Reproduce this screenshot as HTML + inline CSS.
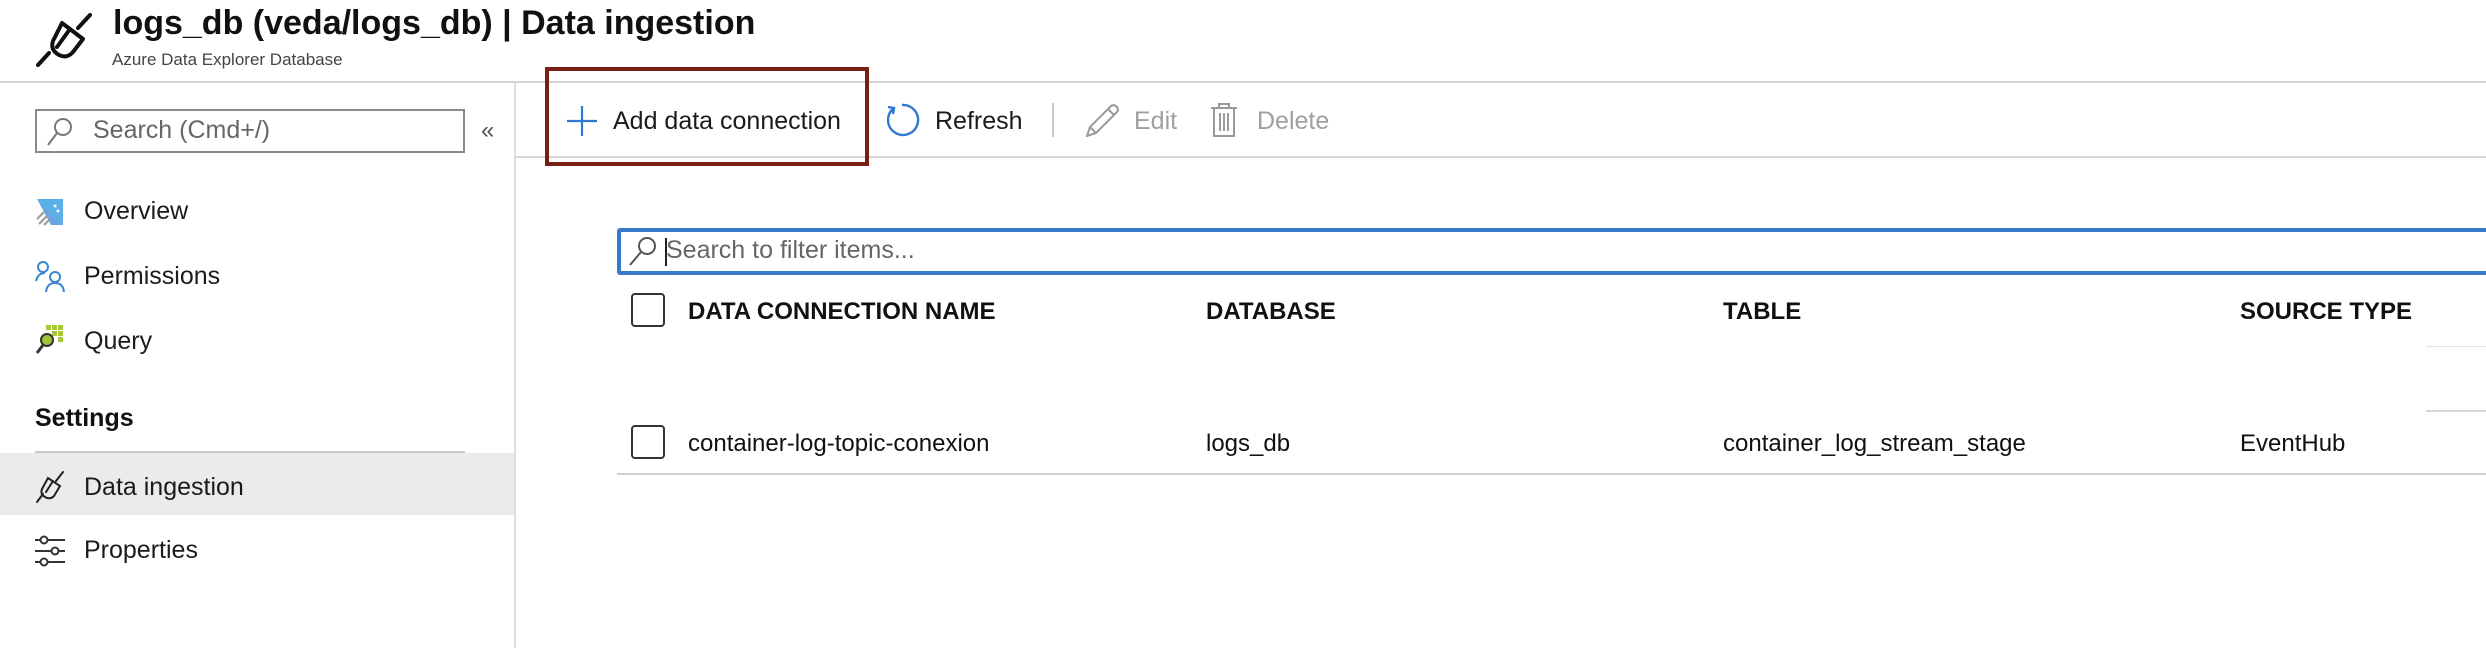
<!DOCTYPE html>
<html><head><meta charset="utf-8"><style>
*{margin:0;padding:0;box-sizing:border-box}
body{width:2486px;height:648px;background:#fff;font-family:"Liberation Sans",sans-serif;color:#1b1b1b;position:relative;overflow:hidden}
.a{position:absolute;white-space:nowrap}
.menu{font-size:25px;color:#1b1b1b}
.hdr{font-size:24px;font-weight:bold;color:#111}
.cell{font-size:24px;color:#111}
.cb{position:absolute;width:34px;height:34px;border:2px solid #333;border-radius:4px;background:#fff}
</style></head><body>
<!-- header -->
<svg class="a" style="left:35px;top:12px" width="58" height="56" viewBox="0 0 58 56"><g fill="none" stroke="#111" stroke-width="4" stroke-linecap="round" stroke-linejoin="round"><path d="M55 3 L43 16"/><path d="M3 53 L14 41"/><path d="M27 11 L48 27 L38 40 Q32 47 24 43 Q15 38 18 29 Z"/><path d="M35 17 L22 35"/></g></svg>
<div class="a" style="left:113px;top:4px;font-size:34px;font-weight:bold;color:#111">logs_db (veda/logs_db) | Data ingestion</div>
<div class="a" style="left:112px;top:50px;font-size:17px;color:#444">Azure Data Explorer Database</div>
<div class="a" style="left:0;top:81px;width:2486px;height:2px;background:#d6d6d6"></div>
<!-- sidebar -->
<div class="a" style="left:514px;top:83px;width:2px;height:565px;background:#dedede"></div>
<div class="a" style="left:35px;top:109px;width:430px;height:44px;border:2px solid #8a8a8a"></div>
<svg class="a" style="left:46px;top:117px" width="28" height="30" viewBox="0 0 28 30"><g fill="none" stroke="#777" stroke-width="2"><circle cx="17" cy="10" r="8"/><path d="M11 16 L2 28"/></g></svg>
<div class="a" style="left:93px;top:116px;font-size:25px;color:#666">Search (Cmd+/)</div>
<div class="a" style="left:481px;top:117px;font-size:24px;color:#555">«</div>
<svg class="a" style="left:35px;top:197px" width="30" height="30" viewBox="0 0 30 30"><path d="M2 2 L28 2 L28 28 Z" fill="#5ab0e8"/><path d="M2 2 L28 28 L16 28 Z" fill="#2a7fd0" opacity=".7"/><g stroke="#999" stroke-width="2"><path d="M2 22 L9 15"/><path d="M4 27 L12 19"/><path d="M9 28 L15 22"/></g><circle cx="20" cy="9" r="1.5" fill="#fff"/><circle cx="23" cy="14" r="1.5" fill="#fff"/></svg>
<div class="a menu" style="left:84px;top:197px">Overview</div>
<svg class="a" style="left:35px;top:261px" width="30" height="32" viewBox="0 0 30 32"><g fill="none" stroke="#3a86d0" stroke-width="2"><circle cx="8" cy="6" r="5"/><path d="M1 20 Q3 12 10 12"/><circle cx="20" cy="16" r="5"/><path d="M11 31 Q12 22 20 22 Q28 22 29 31"/></g></svg>
<div class="a menu" style="left:84px;top:262px">Permissions</div>
<svg class="a" style="left:35px;top:324px" width="30" height="32" viewBox="0 0 30 32"><g fill="#a8c83a"><rect x="11" y="1" width="5" height="5"/><rect x="17" y="1" width="5" height="5"/><rect x="23" y="1" width="5" height="5"/><rect x="17" y="7" width="5" height="5"/><rect x="23" y="7" width="5" height="5"/><rect x="23" y="13" width="5" height="5"/></g><circle cx="12" cy="16" r="6" fill="#9ec23a" stroke="#333" stroke-width="2"/><path d="M8 21 L2 29" stroke="#333" stroke-width="3"/></svg>
<div class="a menu" style="left:84px;top:327px">Query</div>
<div class="a" style="left:35px;top:404px;font-size:25px;font-weight:bold;color:#111">Settings</div>
<div class="a" style="left:35px;top:451px;width:430px;height:2px;background:#c8c8c8"></div>
<div class="a" style="left:0;top:453px;width:514px;height:62px;background:#edebe9"></div>
<svg class="a" style="left:35px;top:470px" width="30" height="34" viewBox="0 0 30 34"><g fill="none" stroke="#222" stroke-width="2" stroke-linecap="round"><path d="M28 2 L21 11"/><path d="M2 32 L8 24"/><path d="M13 8 L25 16 L19 26 Q15 30 10 27 Q5 24 7 19 Z"/><path d="M18 11 L11 22"/></g></svg>
<div class="a menu" style="left:84px;top:473px">Data ingestion</div>
<svg class="a" style="left:35px;top:535px" width="30" height="32" viewBox="0 0 30 32"><g fill="#fff" stroke="#333" stroke-width="2"><path d="M0 5 L30 5 M0 16 L30 16 M0 27 L30 27"/><circle cx="9" cy="5" r="3.5"/><circle cx="20" cy="16" r="3.5"/><circle cx="9" cy="27" r="3.5"/></g></svg>
<div class="a menu" style="left:84px;top:536px">Properties</div>
<!-- toolbar -->
<div class="a" style="left:516px;top:156px;width:1970px;height:2px;background:#d6d6d6"></div>
<div class="a" style="left:545px;top:67px;width:324px;height:99px;border:4px solid #7a1d12"></div>
<svg class="a" style="left:567px;top:106px" width="30" height="30" viewBox="0 0 30 30"><path d="M15 0 V30 M0 15 H30" stroke="#2f78d0" stroke-width="2.2"/></svg>
<div class="a" style="left:613px;top:107px;font-size:25px;color:#1b1b1b">Add data connection</div>
<svg class="a" style="left:885px;top:102px" width="36" height="36" viewBox="0 0 36 36"><g fill="none" stroke="#2f78d0" stroke-width="2.4"><path d="M9 6 A15 15 0 1 0 17 3"/><path d="M3 5 L9 6 L8 12"/></g></svg>
<div class="a" style="left:935px;top:107px;font-size:25px;color:#1b1b1b">Refresh</div>
<div class="a" style="left:1052px;top:103px;width:2px;height:34px;background:#ccc"></div>
<svg class="a" style="left:1086px;top:103px" width="34" height="34" viewBox="0 0 34 34"><g fill="none" stroke="#9a9a9a" stroke-width="2"><path d="M1 33 L4 24 L25 3 Q28 1 31 4 Q33 7 31 9 L10 30 Z"/><path d="M4 24 L10 30"/><path d="M22 6 L28 12"/></g></svg>
<div class="a" style="left:1134px;top:107px;font-size:25px;color:#a0a0a0">Edit</div>
<svg class="a" style="left:1210px;top:103px" width="28" height="34" viewBox="0 0 28 34"><g fill="none" stroke="#9a9a9a" stroke-width="2"><path d="M1 5 H27 M9 5 V1 H19 V5"/><path d="M4 5 V33 H24 V5"/><path d="M10 10 V28 M14 10 V28 M18 10 V28"/></g></svg>
<div class="a" style="left:1257px;top:107px;font-size:25px;color:#a0a0a0">Delete</div>
<!-- filter -->
<div class="a" style="left:617px;top:228px;width:1900px;height:47px;border:4px solid #3a78c9;border-radius:3px"></div>
<svg class="a" style="left:628px;top:235px" width="30" height="32" viewBox="0 0 30 32"><g fill="none" stroke="#555" stroke-width="2"><circle cx="19" cy="11" r="8"/><path d="M13 17 L2 30"/></g></svg>
<div class="a" style="left:665px;top:238px;width:2px;height:28px;background:#222"></div>
<div class="a" style="left:666px;top:236px;font-size:25px;color:#666">Search to filter items...</div>
<!-- table -->
<div class="cb" style="left:631px;top:293px"></div>
<div class="a hdr" style="left:688px;top:298px">DATA CONNECTION NAME</div>
<div class="a hdr" style="left:1206px;top:298px">DATABASE</div>
<div class="a hdr" style="left:1723px;top:298px">TABLE</div>
<div class="a hdr" style="left:2240px;top:298px">SOURCE TYPE</div>
<div class="a" style="left:2426px;top:346px;width:60px;height:1px;background:#e2e2e2"></div>
<div class="a" style="left:2426px;top:410px;width:60px;height:2px;background:#d6d6d6"></div>
<div class="cb" style="left:631px;top:425px"></div>
<div class="a cell" style="left:688px;top:430px">container-log-topic-conexion</div>
<div class="a cell" style="left:1206px;top:430px">logs_db</div>
<div class="a cell" style="left:1723px;top:430px">container_log_stream_stage</div>
<div class="a cell" style="left:2240px;top:430px">EventHub</div>
<div class="a" style="left:617px;top:473px;width:1869px;height:2px;background:#d0d0d0"></div>
</body></html>
